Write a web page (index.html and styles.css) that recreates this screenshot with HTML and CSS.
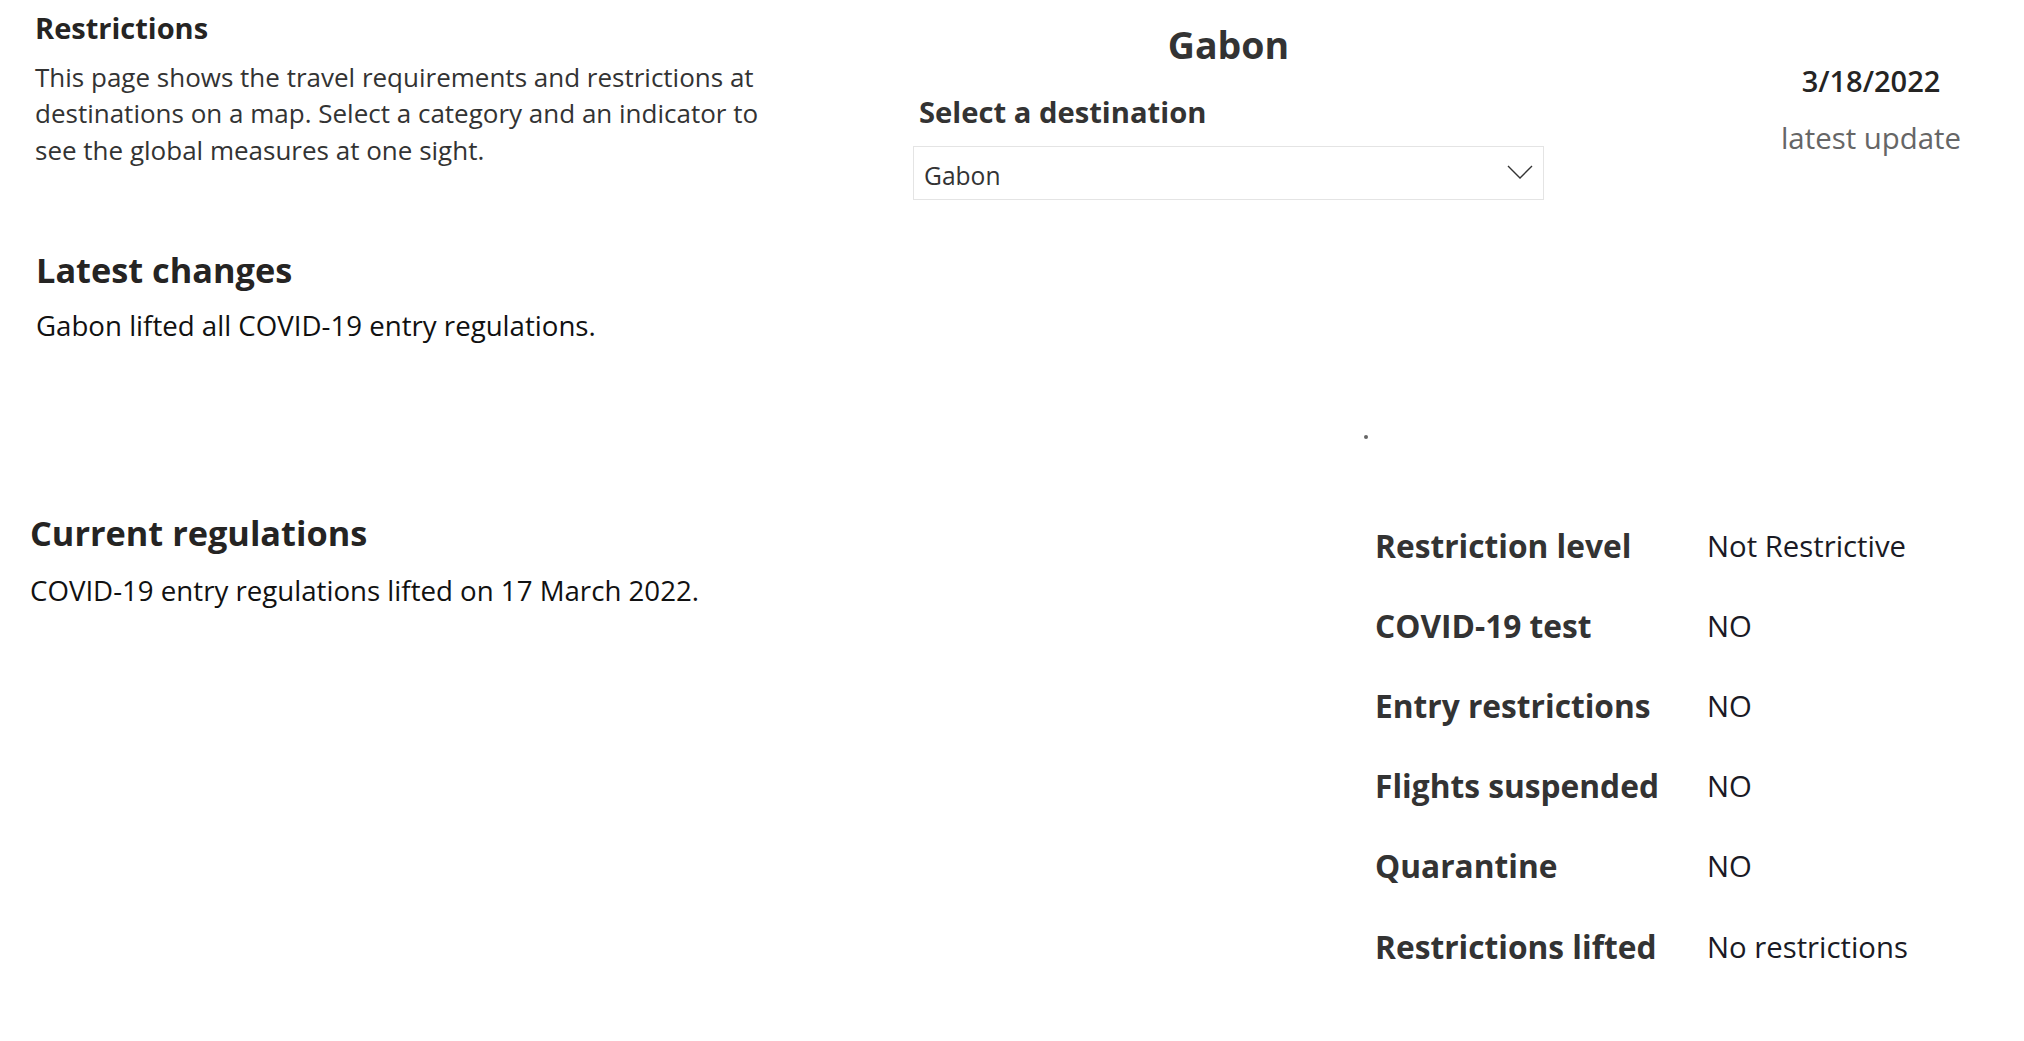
FILE: index.html
```html
<!DOCTYPE html>
<html lang="en">
<head>
<meta charset="utf-8">
<title>Restrictions - Gabon</title>
<link rel="stylesheet" href="styles.css">
</head>
<body>
<div class="page">
  <section class="top">
    <div class="intro">
      <h1 class="intro-title">Restrictions</h1>
      <p class="intro-text">This page shows the travel requirements and restrictions at<br>destinations on a map. Select a category and an indicator to<br>see the global measures at one sight.</p>
      <h2 class="section-title latest-title">Latest changes</h2>
      <p class="body-text latest-text">Gabon lifted all COVID-19 entry regulations.</p>
    </div>
    <div class="selector">
      <div class="country-title">Gabon</div>
      <div class="selector-label">Select a destination</div>
      <div class="dropdown">
        <span class="dropdown-value">Gabon</span>
        <svg class="chevron" width="26" height="14" viewBox="0 0 26 14" aria-hidden="true"><path d="M1 1 L13 13 L25 1" fill="none" stroke="#333" stroke-width="1.4"/></svg>
      </div>
    </div>
    <div class="update">
      <div class="update-date">3/18/2022</div>
      <div class="update-label">latest update</div>
    </div>
  </section>
  <div class="marker-row"><span class="marker-dot"></span></div>
  <section class="bottom">
    <div class="regulations">
      <h2 class="section-title">Current regulations</h2>
      <p class="body-text reg-text">COVID-19 entry regulations lifted on 17 March 2022.</p>
    </div>
    <div class="facts">
      <div class="fact-label">Restriction level</div><div class="fact-value">Not Restrictive</div>
      <div class="fact-label">COVID-19 test</div><div class="fact-value">NO</div>
      <div class="fact-label">Entry restrictions</div><div class="fact-value">NO</div>
      <div class="fact-label">Flights suspended</div><div class="fact-value">NO</div>
      <div class="fact-label">Quarantine</div><div class="fact-value">NO</div>
      <div class="fact-label">Restrictions lifted</div><div class="fact-value">No restrictions</div>
    </div>
  </section>
</div>
</body>
</html>
```
FILE: styles.css
```css
* { box-sizing: border-box; }
html, body { margin: 0; padding: 0; background: #ffffff; }
body {
  font-family: "Open Sans", "Noto Sans", "Liberation Sans", sans-serif;
  color: #252423;
  width: 2024px;
  height: 1041px;
  overflow: hidden;
}
h1, h2, p { margin: 0; font-weight: normal; }

.top {
  display: grid;
  grid-template-columns: 913px 631px 1fr;
}

.intro { padding-left: 35px; }
.intro-title {
  margin-top: 10px;
  font-size: 29px;
  line-height: 36px;
  font-weight: 700;
  color: #252423;
}
.intro-text {
  margin-top: 12.75px;
  font-size: 26px;
  line-height: 36.5px;
  color: #333333;
  white-space: nowrap;
}
.section-title {
  font-size: 34.3px;
  line-height: 44px;
  font-weight: 700;
  color: #252423;
}
.latest-title { margin-top: 79.75px; padding-left: 1px; }
.body-text {
  font-size: 27.65px;
  line-height: 38px;
  color: #111111;
  white-space: nowrap;
}
.latest-text { margin-top: 14px; padding-left: 1px; }

.selector { display: flex; flex-direction: column; }
.country-title {
  margin-top: 20px;
  text-align: center;
  font-size: 37.5px;
  line-height: 50px;
  font-weight: 700;
  color: #333333;
}
.selector-label {
  margin-top: 23px;
  padding-left: 6px;
  font-size: 29.2px;
  line-height: 38px;
  font-weight: 700;
  color: #333333;
}
.dropdown {
  margin-top: 15px;
  height: 54px;
  border: 1px solid #e4e4e4;
  display: flex;
  align-items: center;
  justify-content: space-between;
  padding: 6px 10px 0 10px;
}
.dropdown-value {
  font-size: 24.6px;
  line-height: 30px;
  color: #333333;
}
.chevron { margin-top: -8px; }

.update {
  padding-left: 174px;
  width: 480px;
  text-align: center;
}
.update-date {
  width: 306px;
  margin-top: 61px;
  font-size: 29px;
  line-height: 40px;
  font-weight: 600;
  color: #252423;
}
.update-label {
  width: 306px;
  margin-top: 17px;
  font-size: 29.4px;
  line-height: 40px;
  color: #666666;
}

.marker-row { height: 95px; padding-top: 91px; padding-left: 1364px; }
.marker-dot {
  display: block;
  width: 4px;
  height: 4px;
  border-radius: 50%;
  background: #666666;
}

.bottom {
  margin-top: 67px;
  display: grid;
  grid-template-columns: 1375px 1fr;
}
.regulations { padding-left: 30px; padding-top: 5px; }
.reg-text { margin-top: 16px; }

.facts {
  display: grid;
  grid-template-columns: 332px 1fr;
  grid-auto-rows: 80.1px;
  align-items: center;
}
.fact-label {
  font-size: 31.7px;
  line-height: 44px;
  font-weight: 700;
  color: #333333;
  white-space: nowrap;
}
.fact-value {
  font-size: 29.3px;
  line-height: 40px;
  color: #1a1a24;
  white-space: nowrap;
}
```
